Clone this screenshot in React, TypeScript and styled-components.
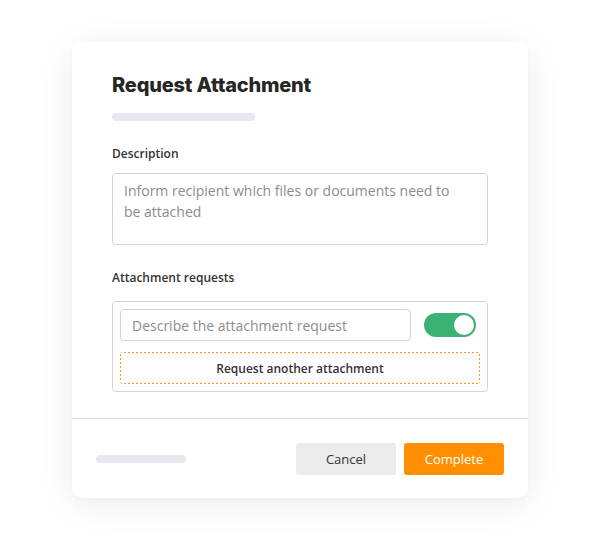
import React from 'react';
import styled, {createGlobalStyle} from "styled-components";

const GlobalStyle = createGlobalStyle`
    * { box-sizing: border-box; }
    body {
        margin: 0;
        background: #fff;
        font-family: "Open Sans", "Liberation Sans", sans-serif;
        color: #333;
    }
`

const Page = styled.div`
    width: 600px;
    height: 540px;
    padding-top: 42px;
    display: flex;
    justify-content: center;
    align-items: flex-start;
`
const Card = styled.section`
    width: 456px;
    background: #fff;
    border-radius: 10px;
    box-shadow: 0 6px 34px rgba(0, 0, 0, 0.08), 0 1px 4px rgba(0, 0, 0, 0.03);
    overflow: hidden;
`
const Body = styled.div`
    padding: 31px 40px 26px;
    border-bottom: 1px solid #d9d9d9;
`
const Title = styled.h2`
    margin: 0;
    font-family: Inter, "Liberation Sans", sans-serif;
    font-size: 20px;
    line-height: 24px;
    font-weight: 800;
    letter-spacing: -0.2px;
    color: #262626;
`
const Skeleton = styled.div<{ $width: number }>`
    width: ${props => props.$width}px;
    height: 8px;
    border-radius: 4px;
    background: #e6eaee;
`
const TitleBar = styled(Skeleton)`
    margin-top: 16px;
`
const Label = styled.div<{ $top: number }>`
    margin-top: ${props => props.$top}px;
    font-size: 12px;
    line-height: 18px;
    font-weight: 600;
    color: #333;
`
const TextArea = styled.textarea`
    display: block;
    width: 100%;
    height: 72px;
    margin-top: 10px;
    padding: 6px 32px 6px 11px;
    border: 1px solid #d4d4d4;
    border-radius: 4px;
    resize: none;
    font-family: inherit;
    font-size: 14px;
    line-height: 21px;
    color: #333;
    outline: none;

    &::placeholder {
        color: #8c8c8c;
    }
`
const RequestBox = styled.div`
    margin-top: 14px;
    padding: 7px 7px 7px;
    border: 1px solid #d4d4d4;
    border-radius: 4px;
    display: flex;
    flex-direction: column;
    gap: 11px;
`
const RequestRow = styled.div`
    display: flex;
    align-items: center;
    gap: 13px;
    padding-right: 4px;
`
const Input = styled.input`
    flex: 1;
    height: 32px;
    padding: 0 11px;
    border: 1px solid #d4d4d4;
    border-radius: 4px;
    font-family: inherit;
    font-size: 14px;
    color: #333;
    outline: none;

    &::placeholder {
        color: #8c8c8c;
    }
`
const Toggle = styled.div<{ $on: boolean }>`
    width: 52px;
    height: 24px;
    border-radius: 12px;
    background: ${props => props.$on ? '#3bb273' : '#ccc'};
    padding: 2px;
    display: flex;
    justify-content: ${props => props.$on ? 'flex-end' : 'flex-start'};

    &::after {
        content: "";
        width: 20px;
        height: 20px;
        border-radius: 50%;
        background: #fff;
    }
`
// short 2px dashes, finer than the browser's dashed border
const AddButton = styled.button`
    height: 32px;
    border: none;
    border-radius: 3px;
    background:
        linear-gradient(90deg, #f7931e 50%, transparent 0) top left / 4px 1px repeat-x,
        linear-gradient(90deg, #f7931e 50%, transparent 0) bottom left / 4px 1px repeat-x,
        linear-gradient(0deg, #f7931e 50%, transparent 0) top left / 1px 4px repeat-y,
        linear-gradient(0deg, #f7931e 50%, transparent 0) top right / 1px 4px repeat-y,
        #fff;
    font-family: inherit;
    font-size: 12px;
    font-weight: 600;
    color: #333;
    cursor: pointer;
`
const Footer = styled.div`
    height: 79px;
    padding: 24px 24px 23px;
    display: flex;
    align-items: center;
    gap: 8px;
`
const Spacer = styled.div`
    flex: 1;
`
const Button = styled.button<{ $primary?: boolean }>`
    width: 100px;
    height: 32px;
    border: none;
    border-radius: 3px;
    background: ${props => props.$primary ? '#ff8f00' : '#ebebeb'};
    color: ${props => props.$primary ? '#fff' : '#333'};
    font-family: inherit;
    font-size: 13px;
    cursor: pointer;
`

const App = () => {
    return (
        <Page>
            <GlobalStyle/>
            <Card>
                <Body>
                    <Title>Request Attachment</Title>
                    <TitleBar $width={143}/>
                    <Label $top={24}>Description</Label>
                    <TextArea placeholder="Inform recipient which files or documents need to be attached"/>
                    <Label $top={24}>Attachment requests</Label>
                    <RequestBox>
                        <RequestRow>
                            <Input placeholder="Describe the attachment request"/>
                            <Toggle $on={true}/>
                        </RequestRow>
                        <AddButton>Request another attachment</AddButton>
                    </RequestBox>
                </Body>
                <Footer>
                    <Skeleton $width={90}/>
                    <Spacer/>
                    <Button>Cancel</Button>
                    <Button $primary>Complete</Button>
                </Footer>
            </Card>
        </Page>
    );
};

export default App;
